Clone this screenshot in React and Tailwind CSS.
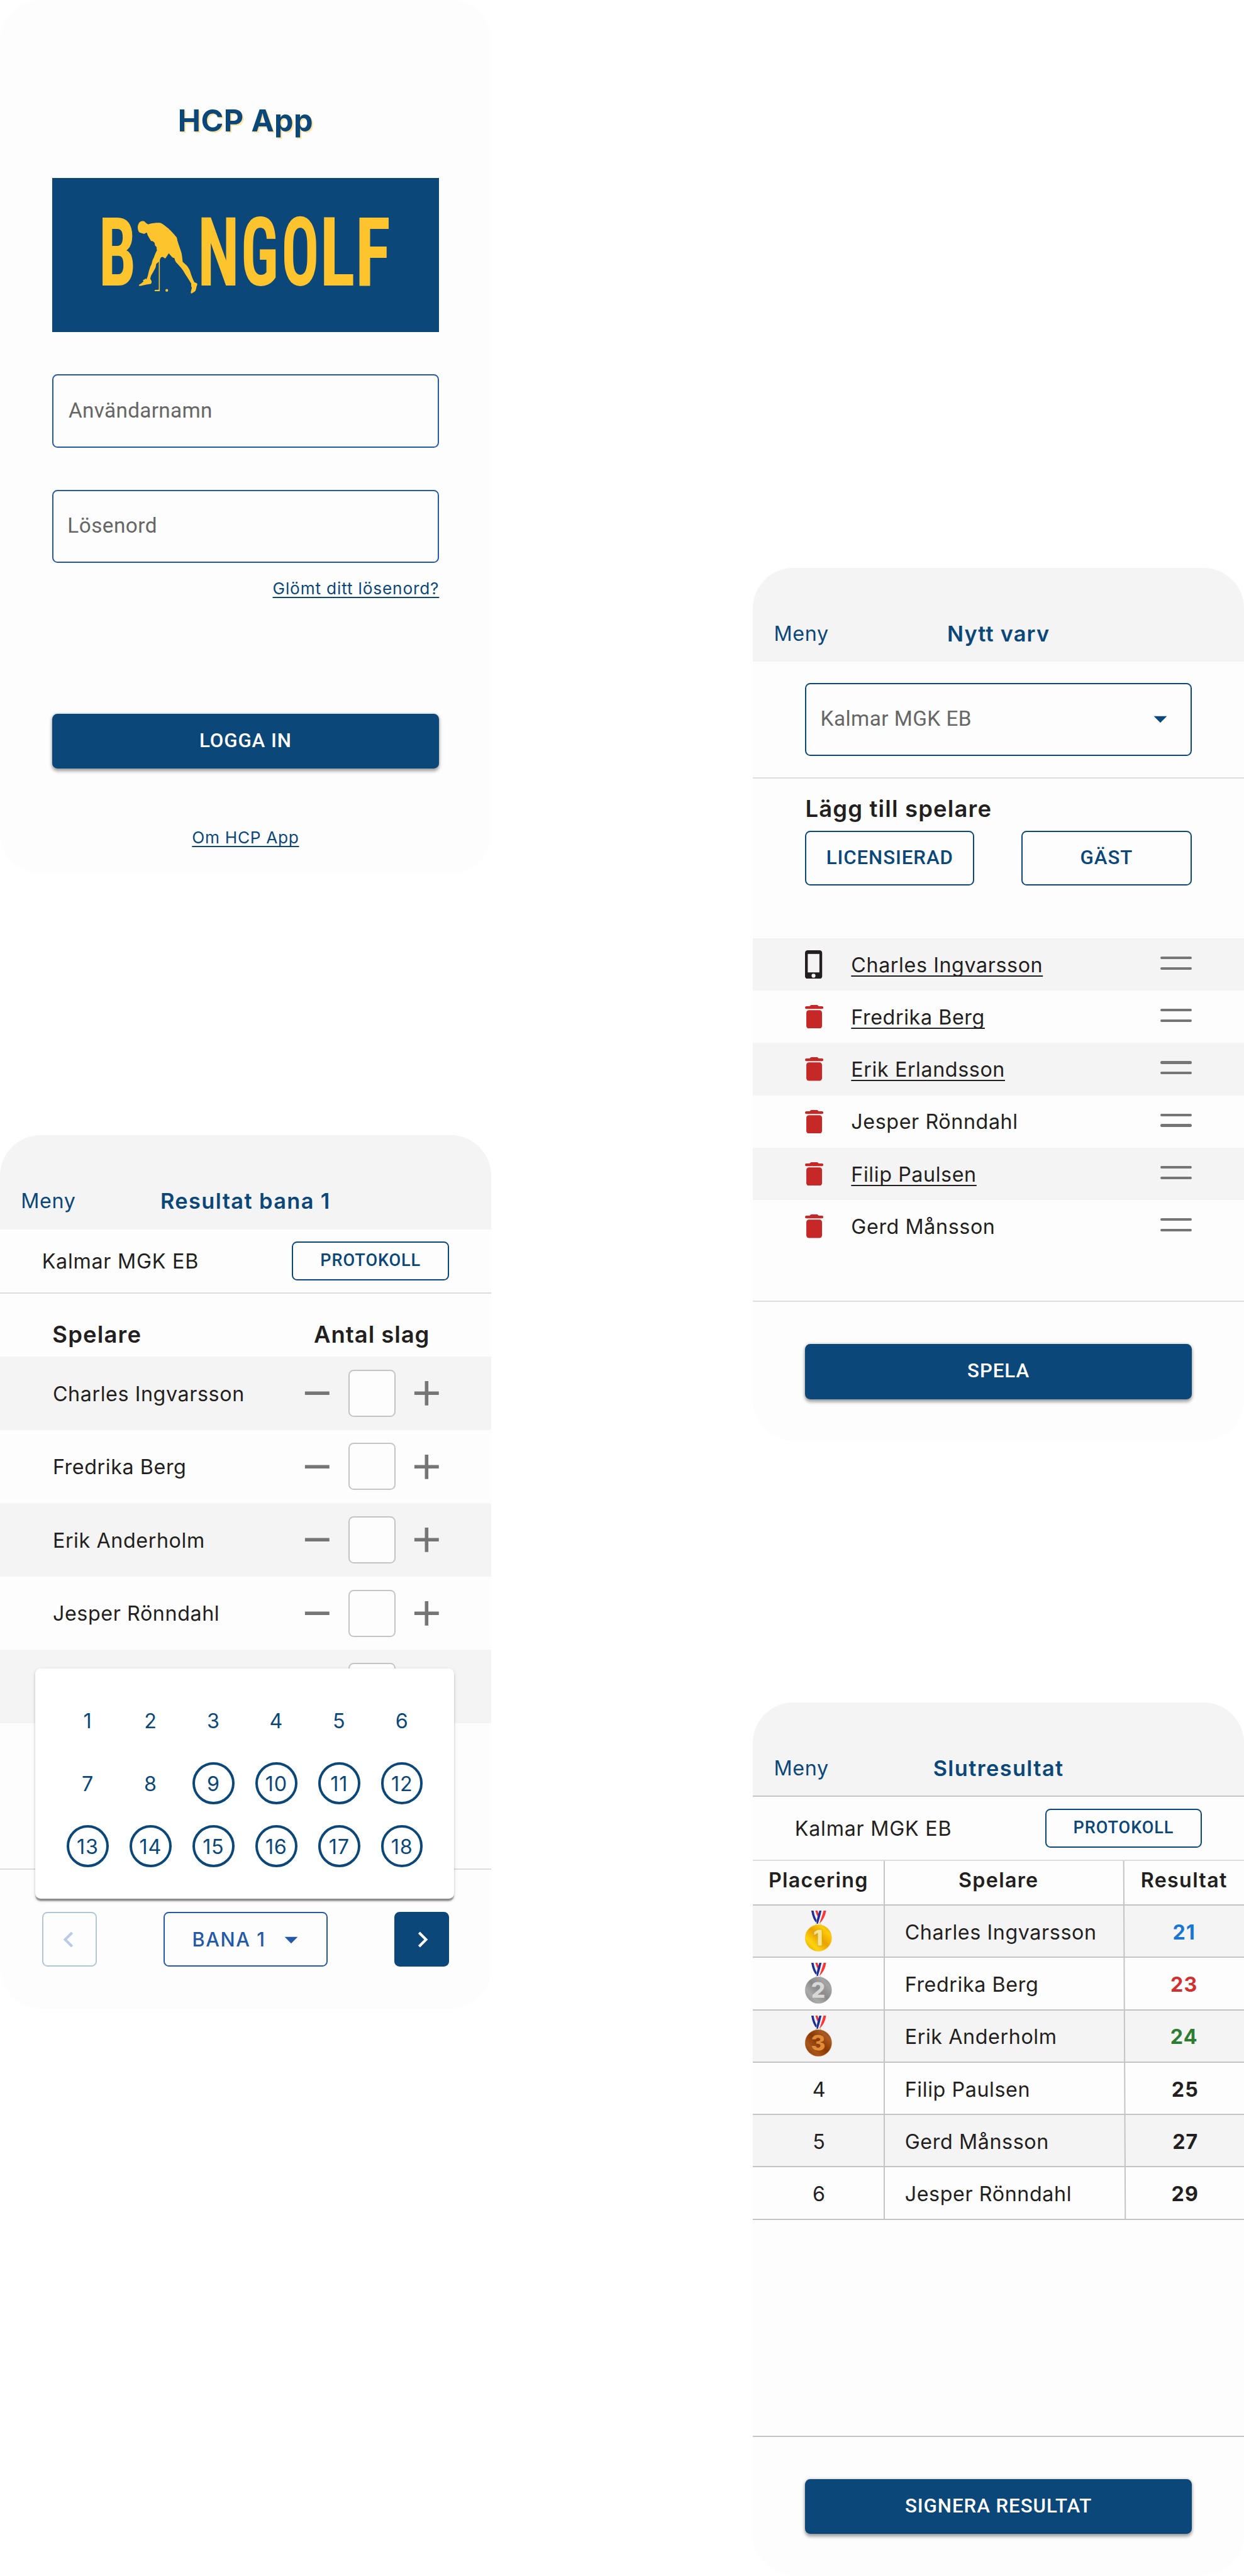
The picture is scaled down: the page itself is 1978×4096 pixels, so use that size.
import React from "react";

function Screen({ children }) {
  return (
    <section className="relative flex h-[667px] w-[375px] flex-col overflow-hidden rounded-[31px] bg-[#FDFDFD] text-[#231F20]">
      {children}
    </section>
  );
}

function Header({ title, line = false, tracking = "tracking-[0.67px]" }) {
  return (
    <header
      className={
        "grid h-[72px] shrink-0 grid-cols-[1fr_auto_1fr] items-center bg-[#F4F4F4] px-4 pt-[29px] text-[#0B4779] " +
        (line ? "border-b border-[#C4C4C4]" : "")
      }
    >
      <a className="text-[15.5px] leading-5 tracking-[0.3px]">Meny</a>
      <h1 className={"text-[16.5px] leading-5 font-semibold " + tracking}>{title}</h1>
      <span />
    </header>
  );
}

function PrimaryButton({ children }) {
  return (
    <button className="mx-10 flex h-[42px] shrink-0 items-center justify-center rounded-[4px] bg-[#0B4779] font-['Roboto',sans-serif] text-[15px] font-medium tracking-[0.46px] text-white shadow-[0_0_2px_rgba(0,0,0,0.14),0_2px_2px_rgba(0,0,0,0.16),0_1px_3px_rgba(0,0,0,0.24)]">
      {children}
    </button>
  );
}

function OutlineButton({ children, className }) {
  return (
    <button
      className={
        "flex items-center justify-center rounded-[4px] border border-[#0B4779] font-['Roboto',sans-serif] font-medium tracking-[0.44px] text-[#0B4779] " +
        className
      }
    >
      {children}
    </button>
  );
}

function TextField({ children, className }) {
  return (
    <div
      className={
        "flex h-14 items-center rounded-[4px] border pb-px font-['Roboto',sans-serif] text-[16px] text-[#666666] " +
        className
      }
    >
      {children}
    </div>
  );
}

function ArrowDown({ className }) {
  return (
    <svg viewBox="0 0 24 24" className={"size-6 " + className} fill="currentColor">
      <path d="M7 10l5 5 5-5z" />
    </svg>
  );
}

const LETTERS = [
  ["B", 312.4, 0.7, 14.5],
  ["N", 614.4, 0.715, 14.5],
  ["G", 741.5, 0.675, 8],
  ["O", 866, 0.655, 9],
  ["L", 988, 0.775, 13.5],
  ["F", 1096, 0.78, 13.5],
];

function Logo() {
  return (
    <svg viewBox="160 544 1180 471" className="mx-10 h-[117.75px] w-[295px] bg-[#0B4779]" fill="#FDC42E">
      {LETTERS.map(([ch, x, scale, bearing]) => (
        <text
          key={ch}
          x={-bearing}
          y="0"
          fontSize="290.7"
          transform={"translate(" + x + " 872.3) scale(" + scale + " 1)"}
          className="font-['Roboto',sans-serif] font-bold font-stretch-condensed"
        >
          {ch}
        </text>
      ))}
      <g transform="translate(400 640) scale(0.33333)">
        <path d="M70 135C76 118 92 107 108 107C118 107 126 109 131 115C140 124 150 132 160 137C175 130 192 127 215 125C240 122 265 123 277 125C295 135 320 153 345 174C375 203 405 236 421 257C425 267 426 285 432 300C440 330 455 365 465 400C471 435 474 460 476 482C492 494 510 510 525 530C540 550 546 572 550 588C560 615 568 640 583 667C592 671 604 672 609 682C611 690 605 700 603 708C600 720 597 735 594 744C585 757 572 762 559 769C553 770 549 767 550 762C551 745 557 733 560 716C553 710 554 700 554 694C553 688 553 682 553 678C540 658 525 632 508 607C490 578 475 550 463 537C448 520 430 502 415 485C405 470 403 460 400 446C392 446 388 444 382 440C370 428 358 415 350 402C338 412 332 430 321 444C318 450 312 450 308 446C300 441 295 436 290 436C280 437 273 443 269 456C266 463 266 470 266 475L266 749L219 749L219 738L254 736C257 735 257 732 257 728L257 478C250 484 243 493 233 500C231 510 231 520 228 530C215 560 200 580 187 605C182 618 178 630 180 640C186 647 191 655 191 664C191 672 188 680 180 683C155 688 130 690 105 697C95 700 85 702 77 700C72 698 74 693 78 689C92 681 107 672 117 657C117 652 108 652 111 646C117 645 125 646 128 640C134 632 140 634 143 641C148 632 155 615 158 600C163 575 170 550 179 525C186 510 193 500 195 483C197 468 205 455 213 438C220 420 226 400 235 385C239 378 241 374 240 370C237 362 235 358 238 350C234 340 225 335 221 327C221 315 220 308 212 300C205 292 195 290 186 290C178 275 165 258 155 237C151 228 151 220 148 214C140 213 135 218 128 222C120 225 112 223 107 219C95 217 83 214 76 207C66 193 63 175 64 160C65 150 66 142 70 135Z" />
        <circle cx="330" cy="742" r="12.5" />
      </g>
    </svg>
  );
}

function LoginScreen() {
  return (
    <Screen>
      <h1 className="mt-[76.4px] h-8 text-center text-[23.3px] leading-8 font-bold tracking-[0.2px] text-[#0B4779] [text-shadow:1px_1px_0_#FDE29B]">
        HCP App
      </h1>
      <div className="mt-[27.6px]">
        <Logo />
      </div>
      <div className="mx-10 mt-[32.25px] flex flex-col gap-8">
        <TextField className="border-[#2459A9] pl-[11.4px] tracking-[0.16px]">Användarnamn</TextField>
        <TextField className="border-[#2459A9] pl-[10.6px] tracking-[0.22px]">Lösenord</TextField>
      </div>
      <a className="mt-[11.4px] mr-[39.6px] self-end text-[12.6px] leading-4 tracking-[0.4px] text-[#0B4779] underline decoration-1 underline-offset-2 [text-decoration-skip-ink:none]">
        Glömt ditt lösenord?
      </a>
      <div className="mt-[87.6px] flex flex-col">
        <PrimaryButton>LOGGA IN</PrimaryButton>
      </div>
      <a className="mt-[44.5px] self-center text-[12.6px] leading-4 tracking-[0.33px] text-[#0B4779] underline decoration-1 underline-offset-2 [text-decoration-skip-ink:none]">
        Om HCP App
      </a>
    </Screen>
  );
}

const PLAYERS = [
  { name: "Charles Ingvarsson", phone: true, link: true },
  { name: "Fredrika Berg", link: true },
  { name: "Erik Erlandsson", link: true },
  { name: "Jesper Rönndahl" },
  { name: "Filip Paulsen", link: true },
  { name: "Gerd Månsson" },
];

function PhoneIcon() {
  return (
    <svg viewBox="0 0 14 22" className="h-[22px] w-[14px]">
      <rect x="0" y="0" width="13.1" height="21.9" rx="2" fill="#231F20" />
      <rect x="2.1" y="2.8" width="8.9" height="14.1" fill="#F4F4F4" />
      <circle cx="6.5" cy="19.4" r="1.5" fill="#F4F4F4" />
    </svg>
  );
}

function TrashIcon() {
  return (
    <svg viewBox="0 0 14 18" className="h-[18px] w-[14px]" fill="#C62828">
      <path d="M1 3h12a1 1 0 0 0 0-2h-2.5l-.6-.7a1 1 0 0 0-.7-.3H4.8a1 1 0 0 0-.7.3L3.5 1H1a1 1 0 0 0 0 2z" />
      <path d="M1 6a2 2 0 0 1 2-2h8a2 2 0 0 1 2 2v10a2 2 0 0 1-2 2H3a2 2 0 0 1-2-2z" />
    </svg>
  );
}

function NewRoundScreen() {
  return (
    <Screen>
      <Header title="Nytt varv" tracking="tracking-[0.56px]" />
      <div className="flex h-[89px] shrink-0 flex-col border-b border-[#DDDDDD] px-10 pt-4">
        <TextField className="justify-between border-[#0B4779] pr-[11px] pl-[10.6px] tracking-[0.22px]">
          Kalmar MGK EB
          <ArrowDown className="text-[#0B4779]" />
        </TextField>
      </div>
      <h2 className="mt-[11.7px] ml-10 text-[17.5px] leading-6 font-semibold tracking-[0.56px]">Lägg till spelare</h2>
      <div className="mx-10 mt-[4.3px] flex justify-between">
        <OutlineButton className="h-[42px] w-[129px] text-[15px]">LICENSIERAD</OutlineButton>
        <OutlineButton className="h-[42px] w-[130px] text-[15px]">GÄST</OutlineButton>
      </div>
      <ul className="mt-10">
        {PLAYERS.map((p) => (
          <li key={p.name} className="flex h-10 items-center px-10 odd:bg-[#F4F4F4]">
            {p.phone ? <PhoneIcon /> : <TrashIcon />}
            <span
              className={
                "ml-[21px] flex-1 pt-px text-[15.5px] leading-5 tracking-[0.28px] " +
                (p.link ? "[&>span]:underline" : "")
              }
            >
              <span className="decoration-1 underline-offset-[2.6px] [text-decoration-skip-ink:none]">{p.name}</span>
            </span>
            <span className="flex flex-col gap-1.5 pb-0.5">
              <i className="h-0.5 w-6 rounded-full bg-[#757575]" />
              <i className="h-0.5 w-6 rounded-full bg-[#757575]" />
            </span>
          </li>
        ))}
      </ul>
      <div className="mt-[37px] flex flex-col border-t border-[#DDDDDD] pt-8">
        <PrimaryButton>SPELA</PrimaryButton>
      </div>
    </Screen>
  );
}

function ClubBar() {
  return (
    <div className="flex h-[49px] shrink-0 items-center justify-between border-b border-[#DDDDDD] px-8">
      <span className="pt-px text-[15.5px] leading-5 tracking-[0.36px]">Kalmar MGK EB</span>
      <OutlineButton className="h-[30px] w-[120px] pb-px text-[13px]">PROTOKOLL</OutlineButton>
    </div>
  );
}

function StrokeRow({ name }) {
  return (
    <li className="flex h-14 items-center gap-2 pr-[33px] pl-[40.3px] odd:bg-[#F4F4F4]">
      <span className="flex-1 pt-px text-[15.5px] leading-5 tracking-[0.28px]">{name}</span>
      <svg viewBox="0 0 24 24" className="size-8" fill="#757575">
        <path d="M19 13H5v-2h14z" />
      </svg>
      <span className="size-9 rounded-[4px] border border-[#C4C4C4] bg-[#FDFDFD]" />
      <svg viewBox="0 0 24 24" className="size-8" fill="#757575">
        <path d="M19 13h-6v6h-2v-6H5v-2h6V5h2v6h6z" />
      </svg>
    </li>
  );
}

function LanePicker() {
  return (
    <div className="absolute top-[407px] left-[27px] grid h-[176px] w-80 grid-cols-6 content-start rounded-[4px] bg-white px-4 pt-4 shadow-[0_2px_1px_-0.5px_rgba(0,0,0,0.28),0_1px_1px_rgba(0,0,0,0.16),0_1px_3px_rgba(0,0,0,0.14)]">
      {Array.from({ length: 18 }, (_, i) => i + 1).map((n) => (
        <span key={n} className="flex h-12 items-center justify-center">
          <span
            className={
              "flex size-8 items-center justify-center rounded-full border-2 pt-px text-[15.5px] leading-5 tracking-[0.4px] text-[#0B4779] " +
              (n > 8 ? "border-[#0B4779]" : "border-transparent")
            }
          >
            {n}
          </span>
        </span>
      ))}
    </div>
  );
}

function LaneScreen() {
  return (
    <Screen>
      <Header title="Resultat bana 1" />
      <ClubBar />
      <div className="flex h-12 shrink-0 items-center justify-between pt-[15px] pr-[46.8px] pl-10 text-[17.5px] font-semibold">
        <h2 className="leading-6 tracking-[0.57px]">Spelare</h2>
        <h2 className="leading-6 tracking-[0.46px]">Antal slag</h2>
      </div>
      <ul className="h-[392px] shrink-0 border-b border-[#DDDDDD]">
        {["Charles Ingvarsson", "Fredrika Berg", "Erik Anderholm", "Jesper Rönndahl", ""].map((n) => (
          <StrokeRow key={n} name={n} />
        ))}
      </ul>
      <div className="flex justify-between px-8 pt-8">
        <button className="flex size-[42px] items-center justify-center rounded-[4px] border border-[#B3C6D6] pr-[1.4px] text-[#BBCBE5]">
          <svg viewBox="0 0 24 24" className="size-6" fill="currentColor">
            <path d="M15.41 7.41L14 6l-6 6 6 6 1.41-1.41L10.83 12z" />
          </svg>
        </button>
        <button className="flex h-[42px] w-[125px] items-center rounded-[4px] border border-[#2459A9] pl-[20.8px] text-[14.7px] font-medium tracking-[0.75px] text-[#2459A9]">
          BANA 1
          <ArrowDown className="ml-[7.5px]" />
        </button>
        <button className="flex size-[42px] items-center justify-center rounded-[4px] bg-[#0B4779] pl-[1.4px] text-white">
          <svg viewBox="0 0 24 24" className="size-6" fill="currentColor">
            <path d="M10 6L8.59 7.41 13.17 12l-4.58 4.59L10 18l6-6z" />
          </svg>
        </button>
      </div>
      <LanePicker />
    </Screen>
  );
}

const MEDALS = {
  1: { stops: ["#DDA000", "#FFD50F", "#E9A200", "#FFCB0B", "#CF8B00"], rim: "#EBC520", loop: "#E9C04A", digit: "#F8E48E", edge: "#C58F0C" },
  2: { stops: ["#8B8B8B", "#ABABAB", "#8A8A8A", "#A6A6A6", "#808080"], rim: "#A8A8A8", loop: "#C9C9C9", digit: "#D8D8D8", edge: "#8A8A8A" },
  3: { stops: ["#8A3905", "#A9551B", "#8A3804", "#AC5A22", "#7C3205"], rim: "#B4611F", loop: "#D9A04F", digit: "#E18B36", edge: "#7A3206" },
};

function Medal({ place }) {
  const m = MEDALS[place];
  const id = "medal-" + place;
  return (
    <svg viewBox="50 52 260 385" className="h-[32.1px] w-[21.67px]">
      <defs>
        <linearGradient id={id} x1="0" y1="1" x2="1" y2="0">
          <stop offset="0.05" stopColor={m.stops[0]} />
          <stop offset="0.27" stopColor={m.stops[1]} />
          <stop offset="0.52" stopColor={m.stops[2]} />
          <stop offset="0.78" stopColor={m.stops[3]} />
          <stop offset="1" stopColor={m.stops[4]} />
        </linearGradient>
      </defs>
      <rect x="157" y="174" width="42" height="20" rx="6" fill="none" stroke={m.loop} strokeWidth="5" />
      <path d="M113 57H178V116L163 160C140 145 125 110 113 57Z" fill="#EEF0F4" />
      <path d="M113 57H134Q142 110 163 145L161 168Q128 145 113 57Z" fill="#1F2E93" />
      <path d="M151 57H171L180 90L172 114Q160 90 151 57Z" fill="#FF2E2E" />
      <path d="M187 57H249Q240 130 188 178H162Q165 130 187 57Z" fill="#F3F4F6" />
      <path d="M187 57H207Q196 110 174 178H163Q161 130 187 57Z" fill="#1F2E93" />
      <path d="M226 57H249Q240 130 186 178Q205 130 226 57Z" fill="#FF3535" />
      <circle cx="178.5" cy="308" r="121.5" fill={"url(#" + id + ")"} stroke={m.rim} strokeWidth="3" />
      <text
        x="176"
        y="380"
        textAnchor="middle"
        fontSize="204"
        stroke={m.edge}
        strokeWidth="3"
        fill={m.digit}
        className="font-['Inter',sans-serif] font-black"
      >
        {place}
      </text>
    </svg>
  );
}

const RESULTS = [
  ["Charles Ingvarsson", 21, "text-[#1976D2]"],
  ["Fredrika Berg", 23, "text-[#D32F2F]"],
  ["Erik Anderholm", 24, "text-[#2E7D32]"],
  ["Filip Paulsen", 25, "pl-[1.5px]"],
  ["Gerd Månsson", 27, "pl-[2px]"],
  ["Jesper Rönndahl", 29, "pl-[1.5px]"],
];

function ResultScreen() {
  return (
    <Screen>
      <Header title="Slutresultat" line />
      <ClubBar />
      <div className="relative flex flex-col">
        <div className="grid h-[34px] grid-cols-[100px_183.5px_1fr] items-center border-b border-[#C4C4C4] pb-[4px] text-[15.5px] leading-5 font-semibold tracking-[0.62px]">
          <span className="text-center">Placering</span>
          <span className="pl-[57px]">Spelare</span>
          <span className="text-center">Resultat</span>
        </div>
        {RESULTS.map(([name, score, color], i) => (
          <div
            key={name}
            className="grid h-10 grid-cols-[100px_183.5px_1fr] items-center border-b border-[#C4C4C4] text-[15.5px] leading-5 tracking-[0.28px] even:bg-[#F4F4F4]"
          >
            <span className="flex justify-center">
              {i < 3 ? <Medal place={i + 1} /> : <span className="pt-0.5 pl-px">{i + 1}</span>}
            </span>
            <span className="pt-0.5 pl-4">{name}</span>
            <span className={"pt-0.5 text-center font-bold tracking-[0.5px] " + color}>{score}</span>
          </div>
        ))}
        <i className="absolute top-0 left-[100px] h-full w-px bg-[#C4C4C4]" />
        <i className="absolute top-0 left-[283.5px] h-full w-px rotate-[-0.26deg] bg-[#C4C4C4]" />
      </div>
      <div className="mt-[165px] flex flex-col border-t border-[#C4C4C4] pt-8">
        <PrimaryButton>SIGNERA RESULTAT</PrimaryButton>
      </div>
    </Screen>
  );
}

export default function App() {
  return (
    <main className="flex h-[1967px] w-[950px] justify-between overflow-hidden bg-white font-['Inter',sans-serif] [zoom:2.0821]">
      <div className="flex flex-col gap-[200px]">
        <LoginScreen />
        <LaneScreen />
      </div>
      <div className="flex flex-col gap-[200px] pt-[433.5px]">
        <NewRoundScreen />
        <ResultScreen />
      </div>
    </main>
  );
}
